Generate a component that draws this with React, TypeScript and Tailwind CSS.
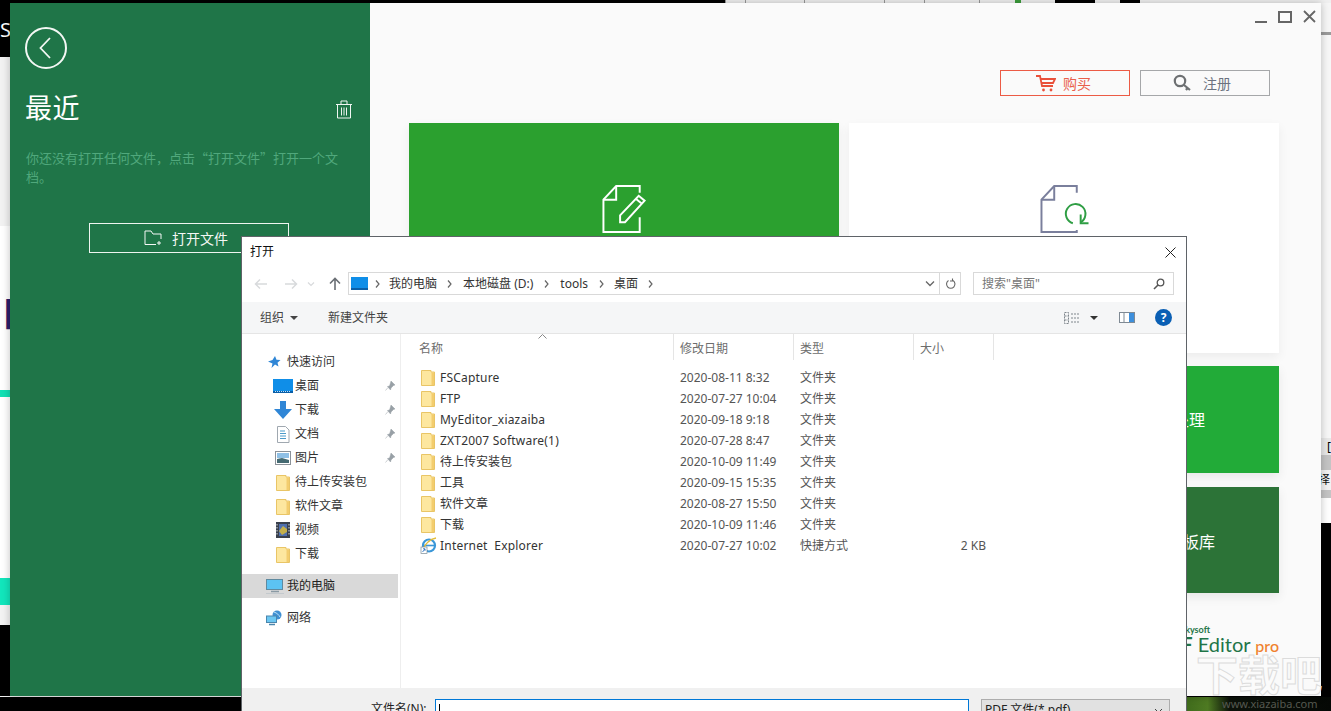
import React from "react";

const font = "font-['Noto_Sans','Noto_Sans_CJK_SC',sans-serif]";

function Folder() {
  return (
    <svg width="14" height="17" viewBox="0 0 14 17" className="shrink-0">
      <path d="M0.5 1.5h9.5v1.5h3.5v13.5h-13z" fill="#fde79f" stroke="#e9c566" />
      <path d="M10.5 3.5h2.5v12.5h-2.5z" fill="#f3cd6e" />
    </svg>
  );
}
function Desk() {
  return (
    <svg width="20" height="14" viewBox="0 0 20 14" className="shrink-0">
      <rect width="20" height="14" fill="#0f8ee8" />
      <rect x="0" y="12" width="20" height="2" fill="#0a5fa8" />
      <path d="M2 12.5h16" stroke="#bfe2fb" strokeDasharray="1 1" />
    </svg>
  );
}
function Arrow() {
  return (
    <svg width="18" height="18" viewBox="0 0 18 18" className="shrink-0">
      <path d="M6 0h6v8h6l-9 10-9-10h6z" fill="#2f86d6" />
    </svg>
  );
}
function DocIcon() {
  return (
    <svg width="14" height="17" viewBox="0 0 14 17" className="shrink-0">
      <path d="M1.5.5h8l3.5 3.5v12.5h-11.5z" fill="#fff" stroke="#a0a8b0" />
      <path d="M4 5h5M4 7.5h6M4 10h6M4 12.5h6" stroke="#4b9ac9" />
    </svg>
  );
}
function Pic() {
  return (
    <svg width="16" height="14" viewBox="0 0 16 14" className="shrink-0">
      <rect x=".5" y=".5" width="15" height="13" fill="#fff" stroke="#8b9299" />
      <rect x="2" y="2" width="12" height="5" fill="#8fc0e6" />
      <path d="M2 12V8l5-1 7 2v3z" fill="#456a72" />
    </svg>
  );
}
function Video() {
  return (
    <svg width="14" height="16" viewBox="0 0 14 16" className="shrink-0">
      <rect width="14" height="16" fill="#39404c" />
      <rect x="3" y="2" width="8" height="12" fill="#4f6fae" />
      <path d="M3 9l4-5 4 3v3l-5 3z" fill="#c5b04a" />
      <path d="M1 2v12M13 2v12" stroke="#d5d8dc" strokeDasharray="1.5 1.5" />
    </svg>
  );
}
function PcIcon() {
  return (
    <svg width="18" height="15" viewBox="0 0 18 15" className="shrink-0">
      <rect x=".5" y=".5" width="16" height="10" fill="#5cc3f3" stroke="#5f8aa0" />
      <path d="M5 12.5h8" stroke="#8a9aa4" strokeWidth="1.5" />
      <path d="M0 14.5h18" stroke="#c3c9cd" />
    </svg>
  );
}
function Net() {
  return (
    <svg width="17" height="16" viewBox="0 0 17 16" className="shrink-0">
      <circle cx="11" cy="5" r="4.5" fill="#3f8fd2" />
      <path d="M8 2c3 1 5 3 6 5" stroke="#bfe3f8" fill="none" />
      <rect x=".5" y="6" width="10" height="6.5" fill="#6cc7f2" stroke="#4a86ad" />
      <path d="M3 14.5h6" stroke="#4a86ad" strokeWidth="1.5" />
    </svg>
  );
}
function Ie() {
  return (
    <svg width="17" height="17" viewBox="0 0 17 17" className="shrink-0">
      <circle cx="9" cy="8.5" r="6" fill="none" stroke="#3a97d8" strokeWidth="2.2" />
      <path d="M3 8.5h11" stroke="#3a97d8" strokeWidth="1.6" />
      <path d="M2 14C5 7 10 2 16 1" fill="none" stroke="#e3bd3a" strokeWidth="1.4" />
      <rect x="1" y="10" width="6" height="6.5" fill="#fff" stroke="#7a8a96" strokeWidth=".7" />
      <path d="M2.5 15l2.500-3M3 11.800h2v2" stroke="#2a6fc0" strokeWidth=".9" fill="none" />
    </svg>
  );
}
function Pin() {
  return (
    <svg width="10" height="10" viewBox="0 0 10 10" className="shrink-0">
      <path d="M6 0l4 4-1.500.5-2.500 2.500-.5 2L2.500 5.500l2-.5L5.500 2zM3 6.500L.5 9.500" fill="#98a0a6" stroke="#98a0a6" strokeWidth=".5" />
    </svg>
  );
}

const navQuick: [React.ReactNode, string, boolean][] = [
  [<Desk />, "桌面", true],
  [<Arrow />, "下载", true],
  [<DocIcon />, "文档", true],
  [<Pic />, "图片", true],
  [<Folder />, "待上传安装包", false],
  [<Folder />, "软件文章", false],
  [<Video />, "视频", false],
  [<Folder />, "下载", false],
];

const rows: [string, string, string, string, boolean][] = [
  ["FSCapture", "2020-08-11 8:32", "文件夹", "", true],
  ["FTP", "2020-07-27 10:04", "文件夹", "", true],
  ["MyEditor_xiazaiba", "2020-09-18 9:18", "文件夹", "", true],
  ["ZXT2007 Software(1)", "2020-07-28 8:47", "文件夹", "", true],
  ["待上传安装包", "2020-10-09 11:49", "文件夹", "", false],
  ["工具", "2020-09-15 15:35", "文件夹", "", false],
  ["软件文章", "2020-08-27 15:50", "文件夹", "", false],
  ["下载", "2020-10-09 11:46", "文件夹", "", false],
  ["Internet  Explorer", "2020-07-27 10:02", "快捷方式", "2 KB", true],
];

function Dialog() {
  return (
    <div className="absolute left-[241px] top-[236px] w-[946px] h-[500px] flex flex-col bg-white border-t border-x border-[#5f6368] text-[12px] text-[#222] overflow-hidden">
      <div className="h-[35px] flex items-center justify-between pl-[8px] pr-[9px] shrink-0">
        <span className="text-[12px] text-[#111] -mt-[5px]">打开</span>
        <svg width="11" height="11" viewBox="0 0 11 11" className="mr-[1px] -mt-[5px]">
          <path d="M.5.500l10 10M10.500.500l-10 10" stroke="#222" strokeWidth="1" />
        </svg>
      </div>
      <div className="h-[23px] shrink-0 flex items-center pl-[12px] pr-[12px]">
        <div className="w-[94px] flex items-center shrink-0">
          <svg width="14" height="12" viewBox="0 0 14 12"><path d="M13 6H1.500M6 1.500L1.500 6 6 10.500" stroke="#d8dadc" strokeWidth="1.500" fill="none" /></svg>
          <svg width="14" height="12" viewBox="0 0 14 12" className="ml-[16px]"><path d="M1 6h11.500M8 1.500L12.500 6 8 10.500" stroke="#d8dadc" strokeWidth="1.500" fill="none" /></svg>
          <svg width="8" height="6" viewBox="0 0 8 6" className="ml-[9px]"><path d="M1 1.500l3 3 3-3" stroke="#d8dadc" strokeWidth="1.200" fill="none" /></svg>
          <svg width="12" height="13" viewBox="0 0 12 13" className="ml-[14px]"><path d="M6 13V2M1 6.500L6 1.500l5 5" stroke="#6a6f75" strokeWidth="1.600" fill="none" /></svg>
        </div>
        <div className="w-[613px] h-[23px] shrink-0 border border-[#d9d9d9] flex items-center text-[#333]">
          <span className="ml-[2px] shrink-0"><svg width="17" height="13" viewBox="0 0 17 13"><rect width="17" height="13" fill="#0f8ee8" /><rect y="11" width="17" height="2" fill="#0a5fa8" /></svg></span>
          <Chev className="ml-[7px]" />
          <span className="ml-[9px]">我的电脑</span>
          <Chev className="ml-[10px]" />
          <span className="ml-[11px]">本地磁盘 (D:)</span>
          <Chev className="ml-[11px]" />
          <span className="ml-[11px]">tools</span>
          <Chev className="ml-[11px]" />
          <span className="ml-[10px]">桌面</span>
          <Chev className="ml-[10px]" />
          <span className="flex-1" />
          <svg width="10" height="7" viewBox="0 0 10 7" className="mr-[4px]"><path d="M1 1.500l4 4 4-4" stroke="#666" strokeWidth="1.300" fill="none" /></svg>
          <span className="w-[21px] h-full border-l border-[#d9d9d9] flex items-center justify-center">
            <svg width="11" height="12" viewBox="0 0 11 12"><path d="M3 2.500a4.200 4.200 0 1 0 4.500 0M3.500 .500v2.500H6" transform="matrix(-1 0 0 1 11 0)" stroke="#666" strokeWidth="1.100" fill="none" /></svg>
          </span>
        </div>
        <div className="ml-[12px] w-[201px] h-[23px] shrink-0 border border-[#d9d9d9] flex items-center justify-between pl-[8px] pr-[8px] text-[#777]">
          <span>搜索"桌面"</span>
          <svg width="12" height="12" viewBox="0 0 12 12"><circle cx="7.500" cy="4.500" r="3.300" fill="none" stroke="#555" strokeWidth="1.300" /><path d="M5 7l-4 4" stroke="#555" strokeWidth="1.600" /></svg>
        </div>
      </div>
      <div className="mt-[7px] h-[32px] shrink-0 bg-[#f5f6f7] border-b border-[#e5e5e5] flex items-center pl-[18px] pr-[14px] text-[#444]">
        <span>组织</span>
        <span className="ml-[6px] w-0 h-0 border-x-[4px] border-x-transparent border-t-[4px] border-t-[#444]" />
        <span className="ml-[30px]">新建文件夹</span>
        <span className="flex-1" />
        <svg width="16" height="12" viewBox="0 0 16 12"><path d="M.5.500h4v11h-4zM.5 4h4M.5 8h4M7 2h9M7 6h9M7 10h9" stroke="#7f868c" fill="none" strokeDasharray="2 1" /></svg>
        <span className="ml-[10px] w-0 h-0 border-x-[4.500px] border-x-transparent border-t-[4.500px] border-t-[#333]" />
        <svg width="16" height="11" viewBox="0 0 16 11" className="ml-[21px]"><rect x=".5" y=".5" width="15" height="10" fill="#fff" stroke="#7f8a94" /><rect x="10" y="1" width="5" height="9" fill="#3d8fdc" /><path d="M5 1v9" stroke="#7f8a94" /></svg>
        <span className="ml-[20px] w-[17px] h-[17px] rounded-full bg-[#0a5fb4] text-white text-[12px] font-bold flex items-center justify-center">?</span>
      </div>
      <div className="h-[354px] shrink-0 flex">
        <div className="w-[159px] shrink-0 border-r border-[#eeeeee] pt-[16px]">
          <div className="w-[156px]">
            <div className="h-[24px] flex items-center pl-[25px] gap-[4px] text-[#333]">
              <svg width="14" height="14" viewBox="0 0 14 14" className="shrink-0"><path d="M8 1l1.500 3.800 4 .3-3 2.600 1 3.900L8 9.500 4.500 13l1-4.500L1 6.500l4.500-1.500z" fill="#2f86d6" /></svg>
              <span className="ml-[2px]">快速访问</span>
            </div>
            {navQuick.map(([ic, t, pin], i) => (
              <div key={i} className="h-[24px] flex items-center text-[#333] relative">
                <span className="w-[52px] flex justify-end pr-[1px] shrink-0"><span className="w-[20px] flex justify-center">{ic}</span></span>
                <span className="ml-[1px]">{t}</span>
                <span className="flex-1" />
                {pin && <span className="mr-[3px]"><Pin /></span>}
              </div>
            ))}
            <div className="mt-[8px] h-[24px] bg-[#d9d9d9] flex items-center pl-[24px] gap-[3px] text-[#222]">
              <PcIcon />
              <span>我的电脑</span>
            </div>
            <div className="mt-[8px] h-[24px] flex items-center pl-[24px] gap-[4px] text-[#333]">
              <Net />
              <span>网络</span>
            </div>
          </div>
        </div>
        <div className="flex-1 flex flex-col min-w-0">
          <div className="h-[26px] shrink-0 grid grid-cols-[272px_120px_120px_81px] text-[#6d6d6d] relative">
            <div className="pl-[18px] flex items-center pt-[4px]">名称</div>
            <div className="pl-[6px] flex items-center border-l border-[#e5e5e5] pt-[4px]">修改日期</div>
            <div className="pl-[6px] flex items-center border-l border-[#e5e5e5] pt-[4px]">类型</div>
            <div className="pl-[6px] flex items-center border-x border-[#e5e5e5] pt-[4px]">大小</div>
            <svg width="9" height="5" viewBox="0 0 9 5" className="absolute left-[137px] top-[0px]"><path d="M.5 4.500l4-4 4 4" stroke="#888" fill="none" /></svg>
          </div>
          <div className="pt-[7px]">
            {rows.map((r, i) => (
              <div key={i} className="h-[21px] grid grid-cols-[272px_120px_120px_73px] items-center text-[#4a4a4a]">
                <div className="flex items-center pl-[20px]">
                  <span className="w-[14px] flex justify-center">{i === 8 ? <Ie /> : <Folder />}</span>
                  <span className={r[4] ? "ml-[5px] whitespace-pre text-[#333] tracking-[0.2px]" : "ml-[5px] whitespace-pre text-[#333]"}>{r[0]}</span>
                </div>
                <div className="pl-[7px] text-[#555]">{r[1]}</div>
                <div className="pl-[7px] text-[#555]">{r[2]}</div>
                <div className="text-right text-[#555]">{r[3]}</div>
              </div>
            ))}
          </div>
        </div>
      </div>
      <div className="flex-1 bg-[#f0f0f0] flex items-start pt-[11px] pl-[129px]">
        <span className="w-[64px] leading-[20px] text-[#222]">文件名(N):</span>
        <div className="w-[534px] h-[24px] bg-white border border-[#0078d7] flex items-center pl-[3px]">
          <span className="w-px h-[14px] bg-black" />
        </div>
        <div className="ml-[12px] w-[189px] h-[24px] bg-[#e1e1e1] border border-[#adadad] pl-[3px] leading-[20px] text-[#222] flex justify-between pr-[6px]">
          <span>PDF 文件(*.pdf)</span>
          <svg width="9" height="6" viewBox="0 0 9 6" className="mt-[8px]"><path d="M1 1l3.500 3.500L8 1" stroke="#444" fill="none" /></svg>
        </div>
      </div>
    </div>
  );
}

function Chev({ className }: { className: string }) {
  return (
    <svg width="5" height="8" viewBox="0 0 5 8" className={"shrink-0 " + className}>
      <path d="M1 .500L4 4 1 7.500" stroke="#666" strokeWidth="1.200" fill="none" />
    </svg>
  );
}

function AppWindow() {
  return (
    <div className="absolute left-[10px] top-[3px] w-[1311px] h-[693px] flex shadow-[0_0_8px_rgba(0,0,0,0.25)]">
      <aside className="w-[360px] shrink-0 bg-[#1f7548] text-white flex flex-col pl-[15px] pr-[16px]">
        <div className="mt-[24px] w-[42px] h-[42px] rounded-full border-2 border-[#f3f7f4] flex items-center justify-center">
          <svg width="12" height="22" viewBox="0 0 12 22" className="-ml-[2px]"><path d="M11 1L1.500 11 11 21" stroke="#f3f7f4" strokeWidth="1.800" fill="none" /></svg>
        </div>
        <div className="mt-[18px] flex items-center justify-between h-[42px]">
          <span className="text-[27px] leading-[42px] tracking-[0.5px]">最近</span>
          <svg width="18" height="19" viewBox="0 0 18 19" className="mr-[1px] mt-[3px]"><path d="M1 4.500h16M6 4.500V1h6v3.500M2.500 4.500V18h13V4.500M6.500 7.500v8M9 7.500v8M11.500 7.500v8" stroke="#f0f6f2" strokeWidth="1" fill="none" /></svg>
        </div>
        <p className="mt-[19px] text-[13px] leading-[19px] text-[#50a87c] ml-[1px] w-[318px] font-['Noto_Sans_CJK_SC',sans-serif]">你还没有打开任何文件，点击“打开文件”打开一个文档。</p>
        <button className="mt-[37px] ml-[64px] w-[200px] h-[30px] border border-[#eef5f0] flex items-center justify-center gap-[9px] text-[14px] text-[#f4f8f5]">
          <svg width="19" height="16" viewBox="0 0 19 16"><path d="M12 14.500H1V1h6l2 3h8v5M15 11v4M13 13h4" stroke="#f4f8f5" fill="none" /></svg>
          <span className="mr-[6px]">打开文件</span>
        </button>
      </aside>
      <main className="flex-1 bg-[#fafafa] flex flex-col pl-[39px] pr-[42px] relative">
        <div className="absolute right-[5px] top-[6px] flex items-start gap-[11px]">
          <span className="mt-[12px] w-[12px] h-[2px] bg-[#666]" />
          <span className="w-[14px] h-[12px] mt-[2px] border-2 border-[#666]" />
          <svg width="13" height="13" viewBox="0 0 13 13" className="mt-[1px]"><path d="M1 1l11 11M12 1L1 12" stroke="#666" strokeWidth="1.800" /></svg>
        </div>
        <div className="mt-[67px] h-[26px] flex justify-end gap-[10px] pr-[9px] text-[14px]">
          <div className="w-[130px] border border-[#ec5b45] flex items-center justify-center gap-[7px] text-[#e9604c] pr-[3px]">
            <svg width="20" height="17" viewBox="0 0 20 17"><path d="M0 1h4l2 10h11M4.500 4H19l-2 4H6" stroke="#e9503a" strokeWidth="1.800" fill="none" /><circle cx="7.500" cy="15" r="1.400" fill="#e9503a" /><circle cx="15" cy="15" r="1.400" fill="#e9503a" /></svg>
            <span>购买</span>
          </div>
          <div className="w-[130px] border border-[#a5a7a9] flex items-center justify-center gap-[11px] text-[#6b7280] pr-[6px]">
            <svg width="19" height="18" viewBox="0 0 19 18"><circle cx="7" cy="7" r="5.200" fill="none" stroke="#6d7072" strokeWidth="2.200" /><path d="M11 11l6 5M14.500 14l-1.500 2" stroke="#6d7072" strokeWidth="2.200" /></svg>
            <span>注册</span>
          </div>
        </div>
        <div className="mt-[27px] grid grid-cols-[430px_430px] gap-x-[10px] shadow-none">
          <div className="h-[230px] bg-[#2ba02f] flex justify-center pt-[62px] pl-[2px] shadow-[0_4px_10px_rgba(0,0,0,0.06)]">
            <svg width="46" height="49" viewBox="0 0 46 50">
              <path d="M38 8V1H14L1 15v33h37V33" fill="none" stroke="#fff" strokeWidth="2" />
              <path d="M14 1v14H1" fill="none" stroke="#fff" strokeWidth="2" />
              <path d="M18 38v-7l19-20 6 5-20 22zM34 14l6 5" fill="none" stroke="#fff" strokeWidth="2" />
            </svg>
          </div>
          <div className="h-[230px] bg-white flex justify-center pt-[62px] pl-[1px] shadow-[0_4px_10px_rgba(0,0,0,0.06)]">
            <svg width="50" height="49" viewBox="0 0 50 50">
              <path d="M37 8V1H14L1 15v33h36v-2" fill="none" stroke="#7a7f9c" strokeWidth="2" />
              <path d="M14 1v14H1" fill="none" stroke="#7a7f9c" strokeWidth="2" />
              <path d="M41 38a10 10 0 1 0-8 1" fill="none" stroke="#2f9e44" strokeWidth="2" />
              <path d="M41 30v9h8" fill="none" stroke="#2f9e44" strokeWidth="2" />
            </svg>
          </div>
        </div>
        <div className="mt-[13px] grid grid-cols-[430px_430px] gap-x-[10px] gap-y-[14px] text-[16px] text-white">
          <div className="h-[107px] bg-[#22ab38]" />
          <div className="h-[107px] bg-[#22ab38] flex items-center justify-end pr-[74px] shadow-[0_4px_10px_rgba(0,0,0,0.08)]">批量处理</div>
          <div className="h-[106px] bg-[#2c7337]" />
          <div className="h-[106px] bg-[#2c7337] flex items-center justify-end pr-[64px] pt-[3px] shadow-[0_4px_10px_rgba(0,0,0,0.08)]">模板库</div>
        </div>
        <div className="mt-[32px] flex flex-col items-end">
          <span className="text-[9px] leading-[10px] font-bold text-[#1f7548] mr-[69px] font-['Lato',sans-serif]">iSkysoft</span>
          <span className="text-[20px] leading-[22px] -mt-[2px] text-[#1f7548] font-['Lato',sans-serif]"><b>PDF</b> Editor <span className="text-[#f0822e] text-[16px] font-medium">pro</span></span>
        </div>
      </main>
    </div>
  );
}

export default function App() {
  return (
    <div className={"relative w-[1331px] h-[711px] overflow-hidden bg-black " + font}>
      {/* desktop behind the windows: left strip */}
      <div className="absolute left-0 top-0 w-[10px] h-[711px] flex flex-col overflow-hidden">
        <div className="h-[57px] bg-black text-white text-[20px] leading-[60px] overflow-hidden shrink-0">S</div>
        <div className="h-[169px] bg-[#f2f2f2] shrink-0" />
        <div className="h-[164px] bg-white shrink-0 overflow-hidden text-[#2d1f6b] text-[34px] font-bold leading-[174px] pl-[1px] whitespace-nowrap">日</div>
        <div className="h-[7px] bg-[#12e0b4] shrink-0" />
        <div className="h-[181px] bg-white shrink-0" />
        <div className="h-[27px] bg-[#12e6bc] shrink-0" />
        <div className="h-[20px] bg-[#f3f3f3] shrink-0" />
        <div className="flex-1 bg-black" />
      </div>
      {/* top strip */}
      <div className="absolute left-[725px] top-0 w-[606px] h-[3px] bg-[#f0f0f0] flex">
        <div className="w-[20px] h-full border-l border-[#999]" />
        <div className="w-[60px] h-full border-x border-[#999]" />
        <div className="w-[80px] h-full border-r border-[#999]" />
        <div className="w-[40px] h-full border-r border-[#999]" />
        <div className="w-[55px] h-full border-r border-[#999]" />
        <div className="w-[75px] h-full flex justify-center"><span className="w-[6px] h-full bg-[#3c9e3c]" /></div>
        <div className="w-[40px] h-full bg-black" />
        <div className="w-[25px] h-full" />
        <div className="w-[20px] h-full bg-black" />
      </div>
      {/* right strip */}
      <div className="absolute left-[1321px] top-[3px] w-[10px] h-[694px] flex flex-col overflow-hidden">
        <div className="h-[29px] bg-[#f6f6f6] shrink-0" />
        <div className="h-[3px] bg-[#9a9a9a] shrink-0" />
        <div className="h-[403px] bg-[#f7f7f7] shrink-0" />
        <div className="h-[17px] bg-[#e8e8e8] shrink-0 pl-[6px] text-[12px] leading-[17px] text-black">[</div>
        <div className="h-[15px] bg-[#c4c4c4] shrink-0" />
        <div className="h-[20px] bg-[#f2f2f2] shrink-0 text-[12px] leading-[20px] text-[#111] whitespace-nowrap -indent-[3px]">择</div>
        <div className="h-[8px] bg-[#c4c4c4] shrink-0" />
        <div className="h-[25px] bg-white shrink-0" />
        <div className="flex-1 bg-black" />
      </div>
      {/* photo under the right side */}
      <div className="absolute left-[1186px] top-[697px] w-[145px] h-[14px] bg-[linear-gradient(90deg,#3f6b1c_0%,#4e7a22_15%,#0c120a_30%,#050805_100%)]" />
      <div className="absolute left-0 top-[696px] w-[242px] h-[1px] bg-[#f0f0f0]" />
      <AppWindow />
      <Dialog />
      {/* watermark */}
      <div className="absolute left-[1196px] top-[648px] text-[42px] leading-[50px] font-bold text-[rgba(255,255,255,0.35)] [-webkit-text-stroke:1px_#dcdcdc] font-['Noto_Sans_CJK_SC',sans-serif] whitespace-nowrap">下载吧</div>
      <div className="absolute left-[1222px] top-[697px] text-[11px] leading-[14px] text-[#55584f] whitespace-nowrap">www.xiazaiba.com</div>
    </div>
  );
}
